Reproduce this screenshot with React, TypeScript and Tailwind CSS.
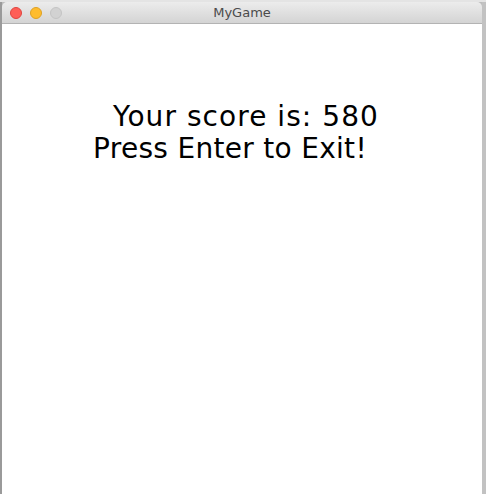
export default function App() {
  return (
    <div className="h-[494px] w-[486px] overflow-hidden bg-[#bdbdbd]" style={{ fontFamily: '"DejaVu Sans", sans-serif' }}>
      <div className="h-[2px] bg-[#e4e4e4]" />
      <div className="flex">
        <div className="w-[2px] bg-[#9a9a9a]" />
        <div className="flex h-[492px] w-[480px] flex-col">
          <div className="relative flex h-[22px] items-center justify-center rounded-t-[5px] border-b border-[#b3b3b3] bg-gradient-to-b from-[#ececec] to-[#d4d4d4]">
            <div className="absolute left-[8px] top-[5px] flex gap-[8px]">
              <span className="h-[12px] w-[12px] rounded-full border border-[#e0443e] bg-[#fe5f57]" />
              <span className="h-[12px] w-[12px] rounded-full border border-[#dea123] bg-[#febc2e]" />
              <span className="h-[12px] w-[12px] rounded-full border border-[#c4c4c4] bg-[#d2d2d2]" />
            </div>
            <span className="text-[13px] text-[#4b4b4b]">MyGame</span>
          </div>
          <div className="flex-1 bg-white pt-[77px] text-[28px] leading-[32px] text-black">
            <div className="pl-[111px] tracking-[1.05px]">Your score is: 580</div>
            <div className="pl-[91px] tracking-[0.3px]">Press Enter to Exit!</div>
          </div>
        </div>
        <div className="w-[4px] bg-[#c2c2c2]" />
      </div>
    </div>
  );
}
